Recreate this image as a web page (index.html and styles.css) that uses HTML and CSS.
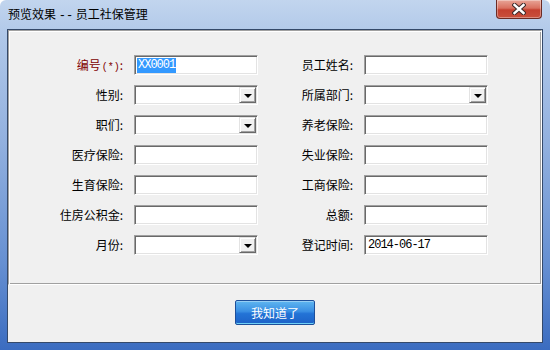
FILE: index.html
```html
<!DOCTYPE html>
<html lang="zh">
<head>
<meta charset="utf-8">
<title>预览效果 -- 员工社保管理</title>
<link rel="stylesheet" href="styles.css">
</head>
<body>
<div class="window">
  <div class="titlebar">
    <span class="title">预览效果 <span class="dash">--</span> 员工社保管理</span>
    <div class="close">
      <svg width="14" height="12" viewBox="0 0 14 12">
        <path d="M2.5 2 L11.5 10 M11.5 2 L2.5 10" stroke="#3c2a2a" stroke-width="4.4" stroke-linecap="square" fill="none"/>
        <path d="M2.5 2 L11.5 10 M11.5 2 L2.5 10" stroke="#ffffff" stroke-width="2.4" stroke-linecap="square" fill="none"/>
      </svg>
    </div>
  </div>
  <div class="client">
    <div class="panel">
      <div class="form">
        <label class="lbl req">编号<span class="paren">(*)</span>:</label>
        <div class="field"><span class="sel">XX0001</span></div>
        <label class="lbl">员工姓名:</label>
        <div class="field"></div>

        <label class="lbl">性别:</label>
        <div class="field combo"><span class="drop"><i class="tri"></i></span></div>
        <label class="lbl">所属部门:</label>
        <div class="field combo"><span class="drop"><i class="tri"></i></span></div>

        <label class="lbl">职们:</label>
        <div class="field combo"><span class="drop"><i class="tri"></i></span></div>
        <label class="lbl">养老保险:</label>
        <div class="field"></div>

        <label class="lbl">医疗保险:</label>
        <div class="field"></div>
        <label class="lbl">失业保险:</label>
        <div class="field"></div>

        <label class="lbl">生育保险:</label>
        <div class="field"></div>
        <label class="lbl">工商保险:</label>
        <div class="field"></div>

        <label class="lbl">住房公积金:</label>
        <div class="field"></div>
        <label class="lbl">总额:</label>
        <div class="field"></div>

        <label class="lbl">月份:</label>
        <div class="field combo"><span class="drop"><i class="tri"></i></span></div>
        <label class="lbl">登记时间:</label>
        <div class="field"><span class="val">2014-06-17</span></div>
      </div>
    </div>
    <div class="actions">
      <button class="btn">我知道了</button>
    </div>
  </div>
</div>
</body>
</html>
```

FILE: styles.css
```css
* { box-sizing: border-box; }
html, body { margin: 0; padding: 0; }
body {
  width: 550px;
  height: 350px;
  overflow: hidden;
  font-family: "Noto Sans CJK SC", "Noto Sans", sans-serif;
  font-size: 12px;
  color: #000;
}
.window {
  width: 550px;
  height: 350px;
  padding: 0 7px 7px 7px;
  display: flex;
  flex-direction: column;
  background: linear-gradient(180deg, #c2d5ee 0%, #b0c8e9 10%, #93b1df 40%, #6690d2 75%, #3b6cc0 100%);
  border-radius: 6px 6px 0 0;
}
.titlebar {
  height: 29px;
  flex: none;
  display: flex;
  justify-content: space-between;
  align-items: flex-start;
  padding-left: 1px;
  padding-right: 1px;
}
.title {
  line-height: 27px;
  font-size: 12px;
  color: #000;
}
.dash {
  font-family: "Liberation Mono", monospace;
  font-size: 12px;
}
.close {
  width: 46px;
  height: 19px;
  border: 1px solid #6b2b24;
  border-top: none;
  border-radius: 0 0 4px 4px;
  background: linear-gradient(180deg, #e8a597 0%, #d9705f 45%, #c4402f 55%, #c9503c 100%);
  box-shadow: inset 0 0 0 1px rgba(255,255,255,0.35);
  display: flex;
  align-items: center;
  justify-content: center;
}
.client {
  flex: 1;
  border: 1px solid #34496a;
  background: #f0f0f0;
  display: flex;
  flex-direction: column;
}
.panel {
  height: 255px;
  flex: none;
  border: 1px solid;
  border-color: #a0a0a0 #ffffff #ffffff #a0a0a0;
  box-shadow: inset 1px 1px 0 #ffffff, inset -1px -1px 0 #a0a0a0;
  padding-top: 24px;
}
.form {
  display: grid;
  grid-template-columns: 115px 124px 86px 124px;
  grid-auto-rows: 20px;
  column-gap: 10px;
  row-gap: 10px;
}
.lbl {
  text-align: right;
  line-height: 20px;
  white-space: nowrap;
  padding-right: 1px;
}
.lbl.req { color: #800000; }
.paren {
  font-family: "Liberation Mono", monospace;
  font-size: 10px;
  padding-left: 1px;
}
.field {
  position: relative;
  height: 20px;
  background: #fff;
  border: 1px solid;
  border-color: #a0a0a0 #ffffff #ffffff #a0a0a0;
  box-shadow: inset 1px 1px 0 #696969, inset -1px -1px 0 #e3e3e3;
  padding: 2px 0 0 2px;
  font-family: "Liberation Mono", "DejaVu Sans Mono", monospace;
  font-size: 12px;
  letter-spacing: -1px;
  line-height: 15px;
}
.sel {
  display: inline-block;
  background: #3399ff;
  color: #fff;
  padding: 0 1px 0 1px;
  height: 15px;
}
.val { padding-left: 1px; }
.combo { padding: 0; }
.drop {
  position: absolute;
  right: 1px;
  top: 1px;
  width: 17px;
  height: 16px;
  background: #f0f0f0;
  border: 1px solid;
  border-color: #e3e3e3 #696969 #696969 #e3e3e3;
  box-shadow: inset 1px 1px 0 #ffffff, inset -1px -1px 0 #a0a0a0;
  display: flex;
  align-items: center;
  justify-content: center;
}
.tri {
  display: block;
  width: 0;
  height: 0;
  border-left: 4px solid transparent;
  border-right: 4px solid transparent;
  border-top: 4px solid #000;
  margin-top: 1px;
}
.actions {
  flex: 1;
  display: flex;
  justify-content: center;
  align-items: flex-start;
  padding-top: 15px;
}
.btn {
  width: 80px;
  height: 25px;
  border: 1px solid #1d4f9a;
  border-radius: 2px;
  background: linear-gradient(180deg, #5fb6f0 0%, #3a8fe3 45%, #2373d6 55%, #1d62c7 100%);
  box-shadow: inset 0 -1px 0 #6fd0f6, inset 0 1px 0 rgba(255,255,255,0.35);
  color: #fff;
  font-family: "Noto Sans CJK SC", sans-serif;
  font-size: 12px;
  line-height: 22px;
  padding: 0;
  letter-spacing: 0;
}
```
